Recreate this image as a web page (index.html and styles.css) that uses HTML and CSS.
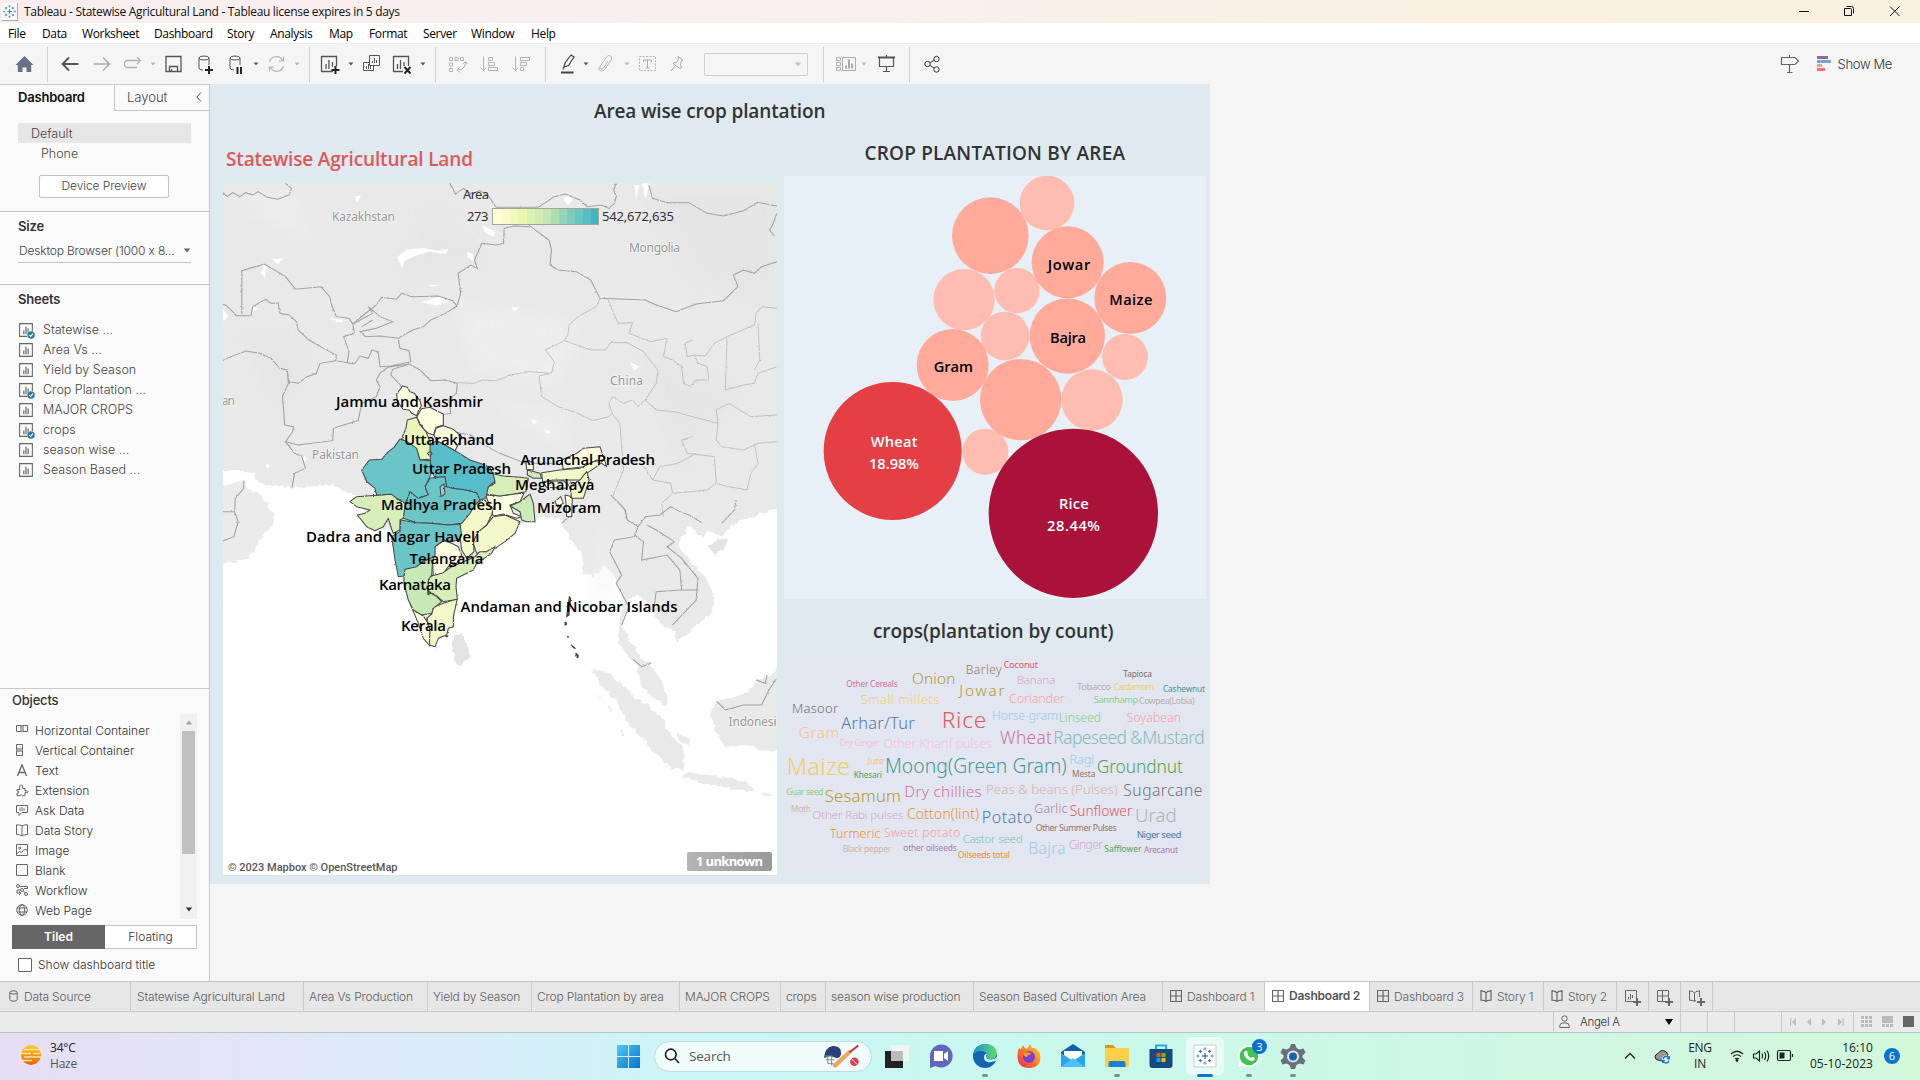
FILE: index.html
```html
<!DOCTYPE html>
<html lang="en">
<head>
<meta charset="utf-8">
<title>Tableau - Statewise Agricultural Land</title>
<link rel="stylesheet" href="styles.css">
</head>
<body>
<svg class="defs" width="0" height="0">
  <defs>
    <symbol id="sheet" viewBox="0 0 16 16"><path d="M1.5 1.5h12v12h-12z" fill="none" stroke="#666"/><path d="M5.5 8v3.500M7.500 4.500v7M9.500 6v5.500" stroke="#555" fill="none"/></symbol>
    <symbol id="sheet-used" viewBox="0 0 16 16"><path d="M1.500 1.500h12v12h-12z" fill="none" stroke="#666"/><path d="M5.500 8v3.500M7.500 4.500v7M9.500 6v5.500" stroke="#555" fill="none"/><circle cx="12.300" cy="12.300" r="4" fill="#fafafa"/><circle cx="12.300" cy="12.300" r="3.500" fill="#2e7ba6"/><path d="M10.600 12.300l1.300 1.300 2.200-2.600" stroke="#fff" fill="none"/></symbol>
    <symbol id="caret" viewBox="0 0 8 5"><path d="M.8.5h6.400L4 4.500z" fill="currentColor"/></symbol>
    <symbol id="dash" viewBox="0 0 12 12"><path d="M.5.500h11v11h-11zM6 .5v11M.5 6h11" fill="none" stroke="#666" stroke-width="1.200"/></symbol>
    <symbol id="story" viewBox="0 0 12 12"><path d="M6 3 4.500 1.500 1 .8v9.400l3.500.3L6 11.500l1.500-1 3.500-.3V.8l-3.500.7zM6 3v8" fill="none" stroke="#666" stroke-width="1.200"/></symbol>
    <symbol id="logo" viewBox="0 0 24 24"><g fill="none" stroke="#4a7ba8" stroke-width="1.700"><path d="M12 8.500v7M8.500 12h7"/><path d="M12 1.500v4M10 3.500h4M12 18.500v4M10 20.500h4" stroke="#6b93b5" stroke-width="1.200"/><path d="M1.500 12h4M3.500 10v4M18.500 12h4M20.500 10v4" stroke="#6b93b5" stroke-width="1.200"/><path d="M6.500 4.500v4M4.500 6.500h4M17.500 4.500v4M15.500 6.500h4M6.500 15.500v4M4.500 17.500h4M17.500 15.500v4M15.500 17.500h4" stroke-width="1.400"/></g></symbol>
  </defs>
</svg>

<header class="titlebar">
  <svg class="app-icon" width="16" height="18"><use href="#logo"/></svg>
  <span class="app-title">Tableau - Statewise Agricultural Land - Tableau license expires in 5 days</span>
  <svg class="win-buttons" width="110" height="20" viewBox="0 0 110 20" fill="none" stroke="#111"><path d="M1 9.500h10M46.500 6.500h6q1 0 1 1v6h-7zM48.500 4.500h5q2 0 2 2v5M92 4.500l9.500 9.500M101.500 4.500 92 14"/></svg>
</header>

<nav class="menubar">
  <span>File</span><span>Data</span><span>Worksheet</span><span>Dashboard</span><span>Story</span><span>Analysis</span><span>Map</span><span>Format</span><span>Server</span><span>Window</span><span>Help</span>
</nav>

<div class="toolbar">
  <div class="tgroup home"><svg class="ic" viewBox="0 0 31 24"><path d="M15.500 4 6.500 13h2.300v7h4.700v-4.500h4V20h4.700v-7h2.300z" fill="#657384"/></svg></div>
  <div class="tgroup g2">
    <svg class="ic" viewBox="0 0 31 24"><path d="M23.500 12H7.500M14 5.500 7.500 12l6.500 6.500" stroke="#555" stroke-width="1.800"/></svg>
    <svg class="ic" viewBox="0 0 31 24"><path d="M7.500 12H23M17 5.500l6.500 6.500-6.500 6.500" stroke="#aaa" stroke-width="1.500"/></svg>
    <svg class="ic" viewBox="0 0 31 24"><path d="M20 15.500h-9q-3.500 0-3.500-3.500T11 8.500h12M20 5.500l3.500 3-3.500 3.500" stroke="#b5b5b5" stroke-width="1.300"/></svg>
    <svg class="cr dim"><use href="#caret"/></svg>
    <svg class="ic" viewBox="0 0 31 24"><path d="M8 4.500h15v15H8zM11.500 19.500v-5h8v5M13.500 17v2.500" stroke="#555" stroke-width="1.300"/></svg>
    <svg class="ic" viewBox="0 0 31 24"><ellipse cx="15" cy="6" rx="5" ry="2" stroke="#555"/><path d="M10 6v10q0 2 4 2M20 6v7" stroke="#555"/><path d="M20 14v8M16 18h8" stroke="#222" stroke-width="2"/></svg>
    <svg class="ic" viewBox="0 0 31 24"><ellipse cx="15" cy="6" rx="5" ry="2" stroke="#555"/><path d="M10 6v10q0 2 4 2M20 6v7" stroke="#555"/><path d="M17.500 15v7M21 15v7" stroke="#222" stroke-width="2"/></svg>
    <svg class="cr"><use href="#caret"/></svg>
    <svg class="ic" viewBox="0 0 31 24"><path d="M8.500 10a7 7 0 0 1 13-1.500M22.500 14a7 7 0 0 1-13 1.500M22.500 4.500v4.500H18M8.500 19.500V15H13" stroke="#b5b5b5" stroke-width="1.200"/></svg>
    <svg class="cr dim"><use href="#caret"/></svg>
  </div>
  <div class="tgroup g3">
    <svg class="ic" viewBox="0 0 31 24"><path d="M18 19.500H6.500v-15h15V14M11 12v5M14 8v9M17.500 10v5" stroke="#555" stroke-width="1.300"/><path d="M20.500 14v8M16.500 18h8" stroke="#222" stroke-width="2"/></svg>
    <svg class="cr"><use href="#caret"/></svg>
    <svg class="ic" viewBox="0 0 31 24"><path d="M13.500 3.500h10v10h-10zM16.500 9v2M18.500 6v5M20.500 8v3M17.500 13.500v5h-10v-8h6M10.500 14v3M12.500 12v5M14.500 14v3" stroke="#555"/></svg>
    <svg class="ic" viewBox="0 0 31 24"><path d="M16 19.500H6.500v-15h15V14M10.500 12v5M13.500 8v9M17 10v4" stroke="#555" stroke-width="1.300"/><path d="m17.500 15 6 6.500M23.500 15l-6 6.500" stroke="#222" stroke-width="1.900"/></svg>
    <svg class="cr"><use href="#caret"/></svg>
  </div>
  <div class="tgroup g4">
    <svg class="ic" viewBox="0 0 31 24"><path d="M7.500 5.500h3v3h-3zM13 5.500h3v3h-3zM18.500 5.500h3v3h-3zM7.500 11h3v3h-3zM7.500 16.500h3v3h-3zM23.500 10q0 8-8.500 8M21 12l2.500-2.500 2 2.500M17.500 15.500 15 18l2.500 2.500" stroke="#b5b5b5"/></svg>
    <svg class="ic" viewBox="0 0 31 24"><path d="M9.500 4.500v14M6.500 15.500l3 3 3-3M14.500 5.500h4v3h-4zM14.500 10.500h6v3h-6zM14.500 15.500h9v3h-9z" stroke="#b5b5b5"/></svg>
    <svg class="ic" viewBox="0 0 31 24"><path d="M9.500 4.500v14M6.500 15.500l3 3 3-3M14.500 5.500h9v3h-9zM14.500 10.500h6v3h-6zM14.500 15.500h3v3h-3z" stroke="#b5b5b5"/></svg>
  </div>
  <div class="tgroup g5">
    <svg class="ic" viewBox="0 0 31 24"><path d="m11 15 1-4 6-8 3 2-5.500 8.500zM11 15l-1 2.500" stroke="#444" stroke-width="1.200"/><path d="M8 20.500h12.500" stroke="#444" stroke-width="2"/></svg>
    <svg class="cr tight"><use href="#caret"/></svg>
    <svg class="ic" viewBox="0 0 31 24"><path d="M17 9l-4.500 7q-1.500 2-3 .8t0-3.200l6-8.600q2-2.500 4-1t.5 4L14 17q-2 3-4.500 2t-1-4" stroke="#b5b5b5"/></svg>
    <svg class="cr dim"><use href="#caret"/></svg>
    <svg class="ic" viewBox="0 0 31 24"><path d="M7.500 4.500h16v14h-16z" stroke="#b5b5b5" stroke-dasharray="2 1.300"/><path d="M11.500 10V8h8v2M15.500 8v8M13.500 16h4" stroke="#aaa"/></svg>
    <svg class="ic" viewBox="0 0 31 24"><path d="m15 4.500 5 3.500-1.500.5-1 4.500 1 2.500-1.500 1-6-4-.5-1.500 3-.5L15.500 7zM12 14l-4 5" stroke="#aaa"/></svg>
    <div class="combo"><svg class="cr"><use href="#caret"/></svg></div>
  </div>
  <div class="tgroup g6">
    <svg class="ic" viewBox="0 0 31 24"><path d="M5.500 5.500h4v3h-4zM5.500 10.500h4v3h-4zM5.500 15.500h4v3h-4zM11.500 5.500h13v13h-13z" stroke="#aaa"/><path d="M15 16.500v-3M18 16.500v-9M21 16.500v-5" stroke="#aaa" stroke-width="2"/></svg>
    <svg class="cr dim tight"><use href="#caret"/></svg>
    <svg class="ic" viewBox="0 0 31 24"><path d="M9 5.500h17" stroke="#555" stroke-width="2"/><path d="M10.500 6v8.500h14V6M17.500 3v2M17.500 14.500v5M14 19.500h7" stroke="#555" stroke-width="1.200"/></svg>
  </div>
  <div class="tgroup g7">
    <svg class="ic" viewBox="0 0 31 24" stroke="#333"><circle cx="10.500" cy="12" r="2.700"/><circle cx="19.500" cy="7" r="2.700"/><circle cx="19.500" cy="17.500" r="2.700"/><path d="m13 10.700 4-2.300M13 13.300l4 2.700"/></svg>
  </div>
  <div class="showme">
    <svg class="sign" width="20" height="20" viewBox="0 0 20 20" fill="none" stroke="#666" stroke-width="1.200"><path d="M1.500 3.500h13.500l3.500 3.500-3.500 3.500H1.500zM9.500 1v2M9.500 10.500v8M7 18.500h5.500"/></svg>
    <svg width="14" height="16" viewBox="0 0 14 16"><path d="M0 0h11v3H0z" fill="#8a719c"/><path d="M0 4h14v3H0z" fill="#7f9fcd"/><path d="M0 8h5v3H0z" fill="#f0a07c"/><path d="M0 12h8v3H0z" fill="#f76d80"/></svg>
    <span>Show Me</span>
  </div>
</div>

<main class="workspace">
  <aside class="side">
    <div class="side-tabs"><b>Dashboard</b><div class="layout-tab"><span>Layout</span><svg width="6" height="10" viewBox="0 0 6 10"><path d="M5 .5.800 5 5 9.500" fill="none" stroke="#444"/></svg></div></div>
    <div class="devices">
      <div class="device sel">Default</div>
      <div class="device sub">Phone</div>
      <div class="preview">Device Preview</div>
    </div>
    <section class="size">
      <h3>Size</h3>
      <div class="size-select"><span>Desktop Browser (1000 x 8...</span><svg width="8" height="5"><use href="#caret"/></svg></div>
    </section>
    <section class="sheets">
      <h3>Sheets</h3>
      <ul>
        <li><svg><use href="#sheet-used"/></svg>Statewise ...</li>
        <li><svg><use href="#sheet"/></svg>Area Vs ...</li>
        <li><svg><use href="#sheet"/></svg>Yield by Season</li>
        <li><svg><use href="#sheet-used"/></svg>Crop Plantation ...</li>
        <li><svg><use href="#sheet"/></svg>MAJOR CROPS</li>
        <li><svg><use href="#sheet-used"/></svg>crops</li>
        <li><svg><use href="#sheet"/></svg>season wise ...</li>
        <li><svg><use href="#sheet"/></svg>Season Based ...</li>
      </ul>
    </section>
    <section class="objects">
      <h3>Objects</h3>
      <div class="obj-body">
        <ul>
          <li><svg viewBox="0 0 13 13"><path d="M.5 1.500h5v6h-5zM6.500 1.500h5v6h-5z"/><path d="M4 2h4v5H4z" fill="#aaa" stroke="none"/></svg>Horizontal Container</li>
          <li><svg viewBox="0 0 13 13"><path d="M.5.500h6v5h-6zM.5 6.500h6v5h-6z"/><path d="M1 4h5v4H1z" fill="#aaa" stroke="none"/></svg>Vertical Container</li>
          <li><svg viewBox="0 0 13 13"><path d="M1.500 12 6 .8 10.500 12M3 8.500h6" stroke-width="1.300"/></svg>Text</li>
          <li><svg viewBox="0 0 13 13"><path d="M1 5.500h3q-1.300-4.500 1.200-4.500t1.300 3.500H9v2.500q3-.8 3 .8T9 8.500v3.200H6.500Q5 9.500 4 11.700H1V9q2 0 2-1t-2-1z"/></svg>Extension</li>
          <li><svg viewBox="0 0 13 13"><path d="M.5 1.500h11v7H6l-3 3v-3H.5z"/><path d="M4 3.500v3.500M6 3v4M8 4v3" stroke="#aaa" stroke-width="1.600"/></svg>Ask Data</li>
          <li><svg viewBox="0 0 13 13"><path d="M6 1.800 3.500 1 .5.800v9.700l3 .3 2.500 1 2.500-1 3-.3V.8l-3 .2zM6 2v9.500"/></svg>Data Story</li>
          <li><svg viewBox="0 0 13 13"><path d="M.5.500h11v11H.5zM1 9.500l2.500-2 2 1 2.500-3 3 .5"/><circle cx="3.800" cy="4" r="1"/></svg>Image</li>
          <li><svg viewBox="0 0 13 13"><path d="M.5.500h11v11H.5z"/></svg>Blank</li>
          <li><svg viewBox="0 0 13 13"><circle cx="2" cy="2" r="1.500"/><circle cx="6" cy="6" r="1.500"/><circle cx="10" cy="10" r="1.500"/><path d="M4 2.500h7.500v2H8M4.500 6H1v3h4M3 7.500l2 1.500-2 2M7.500 7.500l1.500 1"/></svg>Workflow</li>
          <li><svg viewBox="0 0 13 13"><circle cx="6" cy="6" r="5.300"/><ellipse cx="6" cy="6" rx="2.600" ry="5.300"/><path d="M1 4h10M1 8h10"/></svg>Web Page</li>
        </ul>
        <div class="scroll"><svg width="8" height="5" class="up"><use href="#caret"/></svg><div class="thumb"></div><svg width="8" height="5"><use href="#caret"/></svg></div>
      </div>
      <div class="toggle"><b>Tiled</b><span>Floating</span></div>
      <label class="check"><i></i>Show dashboard title</label>
    </section>
  </aside>

  <div class="dashboard">
    <h1><svg width="1000" height="56"><text x="384" y="34" textLength="231.500">Area wise crop plantation</text></svg></h1>
    <div class="panes">
      <div class="pane-map">
        <h2 class="red"><svg width="554" height="43"><text x="3" y="26" textLength="247">Statewise Agricultural Land</text></svg></h2>
        <svg class="map" width="554" height="693" viewBox="223 183 554 693">
          <defs>
            <filter id="rough" x="-5%" y="-5%" width="110%" height="110%"><feTurbulence type="fractalNoise" baseFrequency=".16" numOctaves="2" seed="4"/><feDisplacementMap in="SourceGraphic" scale="6" xChannelSelector="R" yChannelSelector="G"/></filter>
            <filter id="haze"><feGaussianBlur stdDeviation="9"/></filter>
            <linearGradient id="unk" x1="0" x2="1"><stop offset="0" stop-color="#b4b4b4"/><stop offset="1" stop-color="#9a9a9a"/></linearGradient>
          </defs>
          <rect x="223" y="183" width="554" height="693" fill="#fff"/>
          <g filter="url(#rough)">
            <g transform="translate(220 170) scale(.3635 .33333)" fill="#e9e9e9">
              <path d="M-20 0H1560V1010L1480 1032 1440 1050 1410 1065 1385 1095 1345 1085 1330 1100 1290 1072 1265 1105 1262 1130 1300 1180 1340 1230 1360 1280 1355 1325 1320 1360 1290 1385 1255 1415 1253 1385 1205 1355 1190 1310 1170 1295 1150 1272 1120 1290 1107 1368 1130 1420 1160 1465 1185 1485 1215 1530 1235 1602 1225 1608 1190 1580 1160 1550 1148 1490 1095 1420 1100 1360 1108 1290 1085 1220 1060 1185 1025 1220 1000 1205 995 1150 960 1100 940 1050 890 1040 860 1050 815 1070 700 1160 650 1230 645 1370 585 1425 540 1350 490 1210 465 1080 420 1075 400 1030 380 985 350 965 310 945 200 953 110 940 90 910 60 902 -20 905z"/>
              <path d="M-20 950 50 935 68 930 72 955 100 965 150 1030 145 1060 130 1085 105 1115 100 1135 75 1165 45 1175 -20 1185z" fill="#ebebeb"/>
              <path d="M645 1395 665 1395 682 1430 690 1460 665 1487 645 1475 640 1430z" fill="#e4e4e4"/>
              <path d="M1020 1497 1075 1512 1150 1590 1180 1605 1220 1650 1240 1700 1275 1730 1275 1800 1240 1795 1190 1740 1110 1640 1090 1590 1050 1550z"/>
              <path d="M1275 1807 1320 1812 1400 1825 1440 1835 1480 1865 1400 1855 1330 1840 1275 1822zM1490 1868l30 6-5 6-25-4zM1260 1690l30 15 5 20-30-10z"/>
              <path d="M1560 1475 1510 1520 1480 1525 1450 1570 1410 1580 1370 1592 1350 1630 1360 1680 1390 1730 1460 1725 1500 1745 1560 1740z"/>
              <path d="M1345 1130 1370 1108 1398 1112 1385 1140 1360 1155z" fill="#e4e4e4"/>
              <path d="M1030 1572l12 8 4 8zM1068 1605l12 16-6 4zM1098 1675l15 15-6 6zM1120 1700l15 20zM-10 1309l30 2-20 3z"/>
            </g>
          </g>
          <g filter="url(#haze)" opacity=".5">
            <path d="M640 190h140v120l-90-30zM430 200l60 60-90 20zM240 330l70 20-30 60zM640 350l100 40-60 80z" fill="#e2e2e2"/>
            <path d="M450 300l130 20-20 70-90-20zM235 200l60-10 20 60zM600 500l20 80-30 30zM480 400l80 10 20 50z" fill="#f2f2f2"/>
          </g>
          <g transform="translate(220 170) scale(.3635 .33333)" fill="#fff" filter="url(#rough)">
            <path d="M487 262 515 238 560 234 600 242 628 238 620 252 575 245 530 260 505 275 503 298zM555 395l50-15 30 10-40 18zM120 285l8 2-5 38-8-15zM145 268l30-3-15 18zM370 80l18-4-10 22zM1140 45l14 0-10 45zM1160 40l20 0-8 50zM945 88l12-12 14 14-14 16zM722 165l35 20-5 15-20-10zM682 245l15 10 0 20-18-15zM85 405l20 10-15 15zM300 445l50 6-20 6zM800 412l25 0-15 12zM1128 575l25 15-15 12zM855 748l18 4-8 12zM893 780l20 6-16 6zM570 343l32 3-20 5zM0 400l22 40-22 20zM126 880l12 6-8 10zM225 858l15 6-8 14z"/>
          </g>
          <g transform="translate(220 170) scale(.3635 .33333)" class="border" filter="url(#rough)">
            <path d="M0 60 20 80 35 68 55 80 70 68 90 75 105 65 130 82 160 88 190 75 197 55 180 40M632 40 648 72 670 55 690 72 715 62 740 80 760 112 800 112 875 112 920 80 950 72 990 90 1010 110 1050 105 1070 115 1085 100 1090 80 1083 60 1090 40M1180 45 1190 85 1230 98 1290 98 1340 130 1385 138 1440 122 1480 97 1532 108M1532 130 1520 165 1512 180 1525 198"/>
            <path d="M60 437V302L122 282 180 320 208 358 278 350 302 380 308 408 320 440 355 445 365 462 395 435 430 405 445 382 485 388 500 370 530 380 600 378 640 392 652 408 662 370 655 310 690 285 708 295 700 270 720 220 760 225 780 220 782 175 810 168 855 170 880 190 905 210 912 240 908 285 930 300 980 305 1020 330 1045 385 1170 390 1200 405 1255 425 1310 402 1385 392 1425 350 1412 315 1440 300 1470 310 1490 290 1532 275"/>
            <path d="M0 402 15 405 35 425 45 437 85 437 90 410 125 388 140 400 160 400 165 430 190 435 210 455 215 480 245 510 285 535 320 555 318 572 350 578 355 545 340 500 370 490 365 460M365 462 420 430 408 410 440 440 475 455 430 475 385 485 400 500 440 498 490 505 530 480 560 470 580 450 620 430 652 408M390 470 420 450"/>
            <path d="M0 575 30 560 70 543 110 550 140 565 165 595 185 600 190 635 215 640 240 620 265 610 275 580 318 572M350 578 370 582 385 558 408 565 418 540 435 545 440 590 470 588 525 575 520 542 495 535 490 505M185 600 188 640 172 680 178 765 202 770 200 785 180 815 215 825 310 812 312 775 340 765 380 752 390 700 430 680 440 650 430 630 440 610 462 592 520 582 550 600 580 632 620 630 653 640 650 670 630 690 635 730 610 735"/>
            <path d="M180 815 205 850 225 858 235 895 205 910 198 953M505 655 470 615 475 598 520 582M640 785 690 795 720 820 770 850 840 880 900 880 950 885"/>
            <path d="M8 1025 40 1025 50 1055 38 1100 8 1113M40 1025 42 985 65 955 65 930" />
          </g>
          <g transform="translate(220 170) scale(.3635 .33333)" class="border thin" filter="url(#rough)">
            <path d="M1045 385 1035 410 985 440 960 465 958 490 948 512 895 540 920 575 912 610 850 605 800 615 760 632 720 630 700 640 653 638M912 610 878 618 885 680 930 710 980 728 1025 752 1070 740 1078 730 1070 700 1080 680 1110 700 1135 690 1150 710 1170 690 1200 640 1205 600 1190 580 1165 545 1120 518 1075 518 1060 540 1020 540 948 512M1068 390 1095 460 1135 458 1125 490 1185 515 1230 505 1220 560 1245 570 1270 590 1275 640 1295 650 1310 630 1345 630 1340 590 1315 580 1305 555 1285 560 1280 520 1300 510M1305 555 1335 558 1360 520 1395 500 1470 465 1475 430 1490 410 1532 415M1395 500 1390 660 1440 645 1470 640 1480 610 1532 590M1170 690 1200 720 1250 725 1300 740 1370 760 1365 720 1400 700 1460 740 1532 735M1370 760 1365 810 1380 830 1440 840 1480 820 1532 815M1480 460 1485 570 1470 600M1300 800 1270 810 1285 850 1360 860 1365 940 1400 950 1450 960 1460 910 1480 880 1470 820M1078 730 1100 760 1110 900 1080 980 1110 1010 1120 1050M1190 930 1240 940 1245 970 1215 1000 1220 1040M1160 880 1190 930 1210 890 1260 880 1310 850M1245 970 1340 960 1365 940"/>
          </g>
          <g transform="translate(220 170) scale(.3635 .33333)" class="border" filter="url(#rough)">
            <path d="M1075 975 1115 1020 1120 1050 1150 1070 1170 1040 1210 1035 1240 1010 1265 1025 1290 1035 1325 1058M1150 1070 1140 1100 1085 1110 1072 1145 1105 1215 1090 1240 1125 1310 1105 1365M1140 1095 1165 1115 1160 1170 1230 1155 1265 1200 1270 1260 1315 1260M1175 1065 1200 1080 1250 1115 1230 1130 1270 1165 1315 1225 1310 1290 1245 1365M1270 1260 1200 1265 1195 1305M1136 1468 1160 1490 1185 1480M1365 1592 1390 1620 1440 1605 1490 1605 1510 1560 1530 1528M1475 1530 1500 1540 1505 1515M940 1060 955 1045M1380 1060 1415 1020 1420 990"/>
          </g>
          <g transform="translate(320 370) scale(.33333)" class="states" filter="url(#rough)">
            <g fill="#fcfde0">
              <path d="M248 48 262 52 270 65 283 70 300 92 304 108 296 120 290 137 275 130 268 120 250 118 232 95 230 72z"/>
              <path d="M304 116 330 112 352 124 370 132 370 165 348 172 340 195 325 190 312 178 300 160 290 142z"/>
              <path d="M348 175 370 167 400 178 425 200 405 243 375 225 350 212 342 195z"/>
              <path d="M345 530 372 512 395 520 415 530 425 555 410 580 385 590 370 610 340 618 338 580z"/>
              <path d="M497 375 540 378 580 372 612 370 600 395 570 405 580 430 605 440 590 445 550 432 520 438 510 410z"/>
              <path d="M725 270 770 250 790 235 840 230 850 260 860 290 830 270 790 290 730 298z"/>
              <path d="M735 375 757 380 755 440 740 440 738 400zM705 395 722 380 730 400 712 410zM618 275 640 275 640 300 620 298zM668 335 730 332 745 345 740 355 680 352z"/>
              <path d="M270 700 290 725 310 738 325 760 332 790 330 828 310 805 295 760z"/>
            </g>
            <g fill="#f3f8c8">
              <path d="M412 686 400 740 400 770 385 775 380 795 355 805 345 830 328 825 330 780 320 745 335 732 340 712 370 700z"/>
              <path d="M520 440 555 435 600 455 585 490 555 515 525 535 500 545 470 550 460 520 470 490 500 465z"/>
              <path d="M450 420 470 395 495 390 505 405 520 415 515 435 500 465 475 485 460 510 462 545 440 565 425 540 420 500 420 465 425 455z"/>
              <path d="M665 308 720 300 780 295 820 275 850 270 830 290 800 310 790 330 760 330 700 330 668 335z"/>
              <path d="M800 305 808 330 790 385 755 385 750 350 780 330z"/>
            </g>
            <path fill="#ebf5b9" d="M262 150 290 142 300 165 318 185 330 215 335 245 338 272 320 268 300 270 290 240 265 225 245 205 258 175z"/>
            <g fill="#d8eeb9">
              <path d="M90 395 110 380 170 376 220 372 232 388 258 400 250 445 240 450 240 480 220 490 212 470 205 445 190 470 165 482 140 470 112 435 135 430 150 420 110 410z"/>
              <path d="M335 618 370 608 395 590 430 575 465 560 480 545 500 545 525 530 515 550 470 580 460 600 430 615 410 625 408 650 412 688 370 695 350 678 325 665 325 625z"/>
              <path d="M510 310 550 318 600 322 625 325 618 365 580 372 540 378 497 372 505 350 525 340z"/>
            </g>
            <path fill="#cdebb9" d="M630 372 640 400 645 455 620 455 605 450 600 425 570 408 600 395zM622 300 660 310 665 325 640 325 622 315z"/>
            <path fill="#c7e9b7" d="M252 598 290 588 320 570 338 570 335 615 325 630 325 665 350 680 365 695 340 715 335 730 305 735 280 720 265 690 252 640z"/>
            <g fill="#6ac5c7">
              <path d="M240 207 262 215 290 235 300 270 335 272 340 290 330 320 315 350 325 375 290 385 270 372 255 400 230 385 215 373 170 375 165 355 140 335 125 300 148 270 185 268 205 245 222 232z"/>
              <path d="M315 350 330 325 375 318 380 350 400 355 440 360 470 368 480 390 465 405 450 430 425 460 385 465 330 460 290 458 250 445 255 410 270 365 295 385 325 375z"/>
              <path d="M242 450 290 458 330 460 385 465 420 462 425 495 415 510 390 515 372 510 345 530 345 560 310 572 290 590 255 598 252 618 235 620 225 570 215 500 240 485z"/>
            </g>
            <path fill="#58bdcb" d="M330 225 350 212 375 225 410 245 450 270 480 280 510 292 520 315 525 335 505 350 497 385 480 390 470 368 440 360 400 355 380 350 375 320 345 322 332 300z"/>
            <path fill="#fcfde0" d="M322 250l8-6 6 6-6 8zM360 350l12-8 3 30-12 8z" fill-opacity=".2"/>
            <path fill="#555" d="M748 680l4 5-5 50-7 5 4-30zM735 757l5 2-4 7zM743 799l2 1-1 3zM754 825l6 5 6 5-5-1zM768 850l7 6-2 8-6-6zM376 797l8 1-4 3zM322 650l10 20-8 4z"/>
          </g>
          <g class="country">
            <text x="332" y="221" textLength="63">Kazakhstan</text>
            <text x="629" y="252" textLength="51">Mongolia</text>
            <text x="610" y="385" textLength="33">China</text>
            <text x="312" y="459" textLength="47">Pakistan</text>
            <text x="222" y="405" textLength="13">an</text>
            <text x="728.500" y="726" textLength="48">Indonesi</text>
          </g>
          <text x="429" y="512" textLength="26" font-size="12" fill="#4fb3b8">India</text>
          <g class="state-names">
            <text x="336" y="407" textLength="147">Jammu and Kashmir</text>
            <text x="404" y="445" textLength="90">Uttarakhand</text>
            <text x="412" y="474" textLength="99">Uttar Pradesh</text>
            <text x="520.500" y="465" textLength="134.500">Arunachal Pradesh</text>
            <text x="515" y="490" textLength="79.500">Meghalaya</text>
            <text x="381" y="510" textLength="121">Madhya Pradesh</text>
            <text x="537" y="513" textLength="64">Mizoram</text>
            <text x="306" y="542" textLength="173.500">Dadra and Nagar Haveli</text>
            <text x="409.500" y="564" textLength="74">Telangana</text>
            <text x="379" y="590" textLength="72">Karnataka</text>
            <text x="460.500" y="612" textLength="217">Andaman and Nicobar Islands</text>
            <text x="401" y="631" textLength="45">Kerala</text>
          </g>
          <text x="463" y="199" textLength="26" class="lgd" font-weight="500">Area</text>
          <text x="467" y="221" textLength="21.500" class="lgd">273</text>
          <g><rect x="492" y="208" width="107" height="17" fill="#fff"/>
            <path fill="#fefed8" d="M493 209h8v15h-8z"/><path fill="#f8fccb" d="M501 209h9v15h-9z"/><path fill="#f2f9bc" d="M510 209h8v15h-8z"/><path fill="#ebf6b1" d="M518 209h9v15h-9z"/><path fill="#ddf1b2" d="M527 209h8v15h-8z"/><path fill="#d0ecb3" d="M535 209h8v15h-8z"/><path fill="#c2e7b4" d="M543 209h8v15h-8z"/><path fill="#abdfb6" d="M551 209h8v15h-8z"/><path fill="#94d6b9" d="M559 209h8v15h-8z"/><path fill="#7dcdbd" d="M567 209h8v15h-8z"/><path fill="#6bc5c1" d="M575 209h8v15h-8z"/><path fill="#58bdc3" d="M583 209h8v15h-8z"/><path fill="#44b4c4" d="M591 209h8v15h-8z"/>
            <rect x="492.500" y="208.500" width="106" height="16" fill="none" stroke="#a8a595"/></g>
          <text x="602" y="221" textLength="72" class="lgd">542,672,635</text>
          <text x="228" y="871" textLength="169.500" class="attrib">© 2023 Mapbox © OpenStreetMap</text>
          <rect x="687" y="852" width="85" height="19" rx="2" fill="url(#unk)"/>
          <text x="696" y="866" textLength="67" class="unknown">1 unknown</text>
          <path d="M223 875.500h554" fill="none" stroke="#e2e2e2"/>
        </svg>
      </div>
      <div class="pane-right">
        <h2><svg width="422" height="36"><text x="80.500" y="20" textLength="260.500">CROP PLANTATION BY AREA</text></svg></h2>
        <svg class="bubbles" width="422" height="423" viewBox="12 138 1266 1269">
          <g fill="#ffbcb0"><circle cx="801" cy="219" r="82"/><circle cx="552" cy="509" r="92"/><circle cx="711" cy="482" r="68"/><circle cx="675" cy="618" r="73"/><circle cx="1035" cy="681" r="69"/><circle cx="936" cy="810" r="92"/><circle cx="616" cy="965" r="69"/></g>
          <g fill="#ffaa9b"><circle cx="631" cy="317" r="115"/><circle cx="863" cy="397" r="108"/><circle cx="1051" cy="504" r="108"/><circle cx="862" cy="618" r="113"/><circle cx="518" cy="705" r="108"/><circle cx="722" cy="809" r="122"/></g>
          <circle cx="338" cy="963" r="207" fill="#e43f44"/><circle cx="880" cy="1150" r="254" fill="#ab1239"/>
          <g class="blabel"><text x="803" y="420" textLength="128">Jowar</text><text x="988" y="525" textLength="129">Maize</text><text x="810" y="638" textLength="108">Bajra</text><text x="461" y="726" textLength="118">Gram</text></g>
          <g class="blabel white"><text x="272" y="951" textLength="141">Wheat</text><text x="267" y="1016" textLength="150">18.98%</text><text x="837" y="1137" textLength="89">Rice</text><text x="801" y="1203" textLength="159">28.44%</text></g>
        </svg>
        <h2><svg width="422" height="56"><text x="89" y="39" textLength="240.500">crops(plantation by count)</text></svg></h2>
        <svg class="cloud" width="422" height="220" viewBox="12 45 1266 660">
          <text x="557" y="102" textLength="108" font-size="36" fill="#9c755f">Barley</text>
          <text x="671" y="84" textLength="103" font-size="27" class="s" fill="#e15759">Coconut</text>
          <text x="1030" y="111" textLength="86" font-size="25" class="s" fill="#79706e">Tapioca</text>
          <text x="396" y="131" textLength="130" font-size="46" fill="#b6992d">Onion</text>
          <text x="710" y="131" textLength="116" font-size="34" fill="#d4a6c8">Banana</text>
          <text x="199" y="141" textLength="154" font-size="25" class="s" fill="#d37295">Other Cereals</text>
          <text x="891" y="150" textLength="102" font-size="29" class="s" fill="#bab0ac">Tobacco</text>
          <text x="1001" y="150" textLength="121" font-size="26" class="s" fill="#f1ce63">Cardamom</text>
          <text x="1149" y="156" textLength="126" font-size="25" class="s" fill="#499894">Cashewnut</text>
          <text x="538" y="168" textLength="136" font-size="46" fill="#b6992d">Jowar</text>
          <text x="242" y="192" textLength="236" font-size="38" fill="#f1ce63">Small millets</text>
          <text x="688" y="189" textLength="166" font-size="36" fill="#ff9d9a">Coriander</text>
          <text x="941" y="189" textLength="134" font-size="28" class="s" fill="#8cd17d">Sannhamp</text>
          <text x="1077" y="192" textLength="167" font-size="26" class="s" fill="#bab0ac">Cowpea(Lobia)</text>
          <text x="36" y="219" textLength="138" font-size="39" fill="#79706e">Masoor</text>
          <text x="184" y="267" textLength="220" font-size="49" fill="#4e79a7">Arhar/Tur</text>
          <text x="485" y="264" textLength="134" font-size="68" fill="#e15759">Rice</text>
          <text x="636" y="241" textLength="198" font-size="37" fill="#a0cbe8">Horse-gram</text>
          <text x="836" y="246" textLength="127" font-size="36" fill="#8cd17d">Linseed</text>
          <text x="1040" y="246" textLength="163" font-size="36" fill="#ff9d9a">Soyabean</text>
          <text x="56" y="293" textLength="122" font-size="46" fill="#ffbe7d">Gram</text>
          <text x="179" y="318" textLength="121" font-size="26" class="s" fill="#fabfd2">Dry Ginger</text>
          <text x="310" y="324" textLength="326" font-size="38" fill="#fabfd2">Other Kharif pulses</text>
          <text x="660" y="312" textLength="156" font-size="52" fill="#d37295">Wheat</text>
          <text x="820" y="312" textLength="454" font-size="52" fill="#86bcb6">Rapeseed &amp;Mustard</text>
          <text x="20" y="405" textLength="190" font-size="70" fill="#f1ce63">Maize</text>
          <text x="263" y="372" textLength="49" font-size="27" class="s" fill="#ffbe7d">Jute</text>
          <text x="221" y="413" textLength="85" font-size="25" class="s" fill="#59a14f">Khesari</text>
          <text x="315" y="399" textLength="545" font-size="58" fill="#499894">Moong(Green Gram)</text>
          <text x="868" y="373" textLength="74" font-size="40" fill="#a0cbe8">Ragi</text>
          <text x="876" y="411" textLength="70" font-size="25" class="s" fill="#9c755f">Mesta</text>
          <text x="950" y="399" textLength="259" font-size="52" fill="#59a14f">Groundnut</text>
          <text x="19" y="465" textLength="111" font-size="25" class="s" fill="#8cd17d">Guar seed</text>
          <text x="134" y="486" textLength="229" font-size="50" fill="#b6992d">Sesamum</text>
          <text x="373" y="471" textLength="232" font-size="46" fill="#d37295">Dry chillies</text>
          <text x="618" y="462" textLength="395" font-size="40" fill="#d7b5a6">Peas &amp; beans (Pulses)</text>
          <text x="1030" y="467" textLength="237" font-size="47" fill="#79706e">Sugarcane</text>
          <text x="33" y="515" textLength="60" font-size="25" class="s" fill="#d7b5a6">Moth</text>
          <text x="97" y="537" textLength="273" font-size="35" fill="#d4a6c8">Other Rabi pulses</text>
          <text x="381" y="536" textLength="216" font-size="41" fill="#f28e2b">Cotton(lint)</text>
          <text x="605" y="548" textLength="152" font-size="48" fill="#4e79a7">Potato</text>
          <text x="763" y="519" textLength="99" font-size="37" fill="#b07aa1">Garlic</text>
          <text x="869" y="528" textLength="188" font-size="41" fill="#e15759">Sunflower</text>
          <text x="1065" y="545" textLength="125" font-size="56" fill="#bab0ac">Urad</text>
          <text x="767" y="573" textLength="243" font-size="26" class="s" fill="#9c755f">Other Summer Pulses</text>
          <text x="150" y="594" textLength="151" font-size="37" fill="#f28e2b">Turmeric</text>
          <text x="312" y="591" textLength="229" font-size="36" fill="#ff9d9a">Sweet potato</text>
          <text x="548" y="609" textLength="180" font-size="35" fill="#86bcb6">Castor seed</text>
          <text x="1070" y="594" textLength="134" font-size="29" class="s" fill="#4e79a7">Niger seed</text>
          <text x="188" y="635" textLength="146" font-size="26" class="s" fill="#d7b5a6">Black pepper</text>
          <text x="370" y="632" textLength="160" font-size="25" class="s" fill="#b07aa1">other oilseeds</text>
          <text x="745" y="642" textLength="112" font-size="47" fill="#a0cbe8">Bajra</text>
          <text x="866" y="627" textLength="103" font-size="36" fill="#d4a6c8">Ginger</text>
          <text x="973" y="635" textLength="111" font-size="25" class="s" fill="#59a14f">Safflower</text>
          <text x="1092" y="638" textLength="102" font-size="25" class="s" fill="#b07aa1">Arecanut</text>
          <text x="533" y="654" textLength="157" font-size="26" class="s" fill="#f28e2b">Oilseeds total</text>
        </svg>
      </div>
    </div>
  </div>
</main>

<nav class="sheet-tabs">
  <div><svg width="9" height="12" viewBox="0 0 9 12"><path d="M.8 2.500v7q0 1.700 3.700 1.700t3.700-1.700v-7Q8.200.8 4.500.8T.8 2.500q0 1.500 3.700 1.500t3.700-1.500" fill="none" stroke="#666"/></svg>Data Source</div>
  <div>Statewise Agricultural Land</div><div>Area Vs Production</div><div>Yield by Season</div><div>Crop Plantation by area</div><div>MAJOR CROPS</div><div>crops</div><div>season wise production</div><div>Season Based Cultivation Area</div>
  <div><svg width="12" height="12"><use href="#dash"/></svg>Dashboard 1</div>
  <div class="active"><svg width="12" height="12"><use href="#dash"/></svg>Dashboard 2</div>
  <div><svg width="12" height="12"><use href="#dash"/></svg>Dashboard 3</div>
  <div><svg width="12" height="12"><use href="#story"/></svg>Story 1</div>
  <div><svg width="12" height="12"><use href="#story"/></svg>Story 2</div>
  <div class="new"><svg width="17" height="16" viewBox="0 0 17 16" fill="none" stroke="#666"><path d="M9 11.500H1.500v-11h11V8M4.500 7v2.500M6.500 4v5.500M8.500 5v3"/><path d="M13 8v8M9 12h8" stroke-width="2"/></svg></div>
  <div class="new"><svg width="17" height="16" viewBox="0 0 17 16" fill="none" stroke="#666"><path d="M9 11.500H1.500v-11h11V8M6.500.5v11M1.500 6h11"/><path d="M13 8v8M9 12h8" stroke-width="2"/></svg></div>
  <div class="new"><svg width="17" height="16" viewBox="0 0 17 16" fill="none" stroke="#666"><path d="M6.500 3 5 1.500 1.500.8v9.400l3.500.3 1.500 1 1.500-1M6.500 3v8M6.500 3 8 1.500l3.500-.7V7"/><path d="M13 8v8M9 12h8" stroke-width="2"/></svg></div>
  <div class="rest"></div>
</nav>

<div class="status">
  <div class="fill"></div>
  <div class="user"><svg width="11" height="14" viewBox="0 0 11 14" fill="none" stroke="#666"><circle cx="5.500" cy="3.500" r="2.700"/><path d="M.8 12.500V11q0-3 3-3h3.400q3 0 3 3v1.500z"/></svg><span>Angel A</span><svg width="8" height="6" viewBox="0 0 8 6"><path d="M0 0h8L4 6z" fill="#000"/></svg></div>
  <div></div><div></div><div></div>
  <div class="navs"><svg width="58" height="10" viewBox="0 0 58 10" fill="#bdbdbd"><path d="M2 1h1.200v8H2zM8 1v8L4 5zM23 1v8l-4-4zM34 1v8l4-4zM50 1v8l4-4zM54.500 1h1.200v8h-1.200z"/></svg></div>
  <div class="views"><svg width="54" height="12" viewBox="0 0 54 12"><path d="M0 0h3v3H0zM4 0h3v3H4zM8 0h3v3H8zM0 4h3v3H0zM4 4h3v3H4zM8 4h3v3H8zM0 8h3v3H0zM4 8h3v3H4zM8 8h3v3H8zM21 0h11v7H21zM21 8h3v3h-3zM25 8h3v3h-3zM29 8h3v3h-3z" fill="#bbb"/><path d="M42 0h11v11H42z" fill="#666"/></svg></div>
</div>

<footer class="taskbar">
  <div class="weather">
    <svg width="24" height="22" viewBox="0 0 24 22"><defs><linearGradient id="sun" x2="0" y2="1"><stop offset="0" stop-color="#f9cf1c"/><stop offset="1" stop-color="#e8620c"/></linearGradient></defs><circle cx="12" cy="10" r="10" fill="url(#sun)"/><path d="M5 4.500h19M2 8.500h10M14 8.500h7M5 12h19M0 15.500h13" stroke="#f8e3ae" stroke-width="1.500"/></svg>
    <div><div>34°C</div><div class="haze">Haze</div></div>
  </div>
  <div class="apps">
    <svg class="start" width="23" height="23" viewBox="0 0 23 23"><defs><linearGradient id="win" x2="1" y2="1"><stop offset="0" stop-color="#4cc9f5"/><stop offset="1" stop-color="#0a6fd0"/></linearGradient></defs><path d="M0 0h11v11H0zM12 0h11v11H12zM0 12h11v11H0zM12 12h11v11H12z" fill="url(#win)"/></svg>
    <div class="search">
      <svg width="16" height="16" viewBox="0 0 16 16" fill="none" stroke="#222" stroke-width="1.700"><circle cx="6.800" cy="6.500" r="5.300"/><path d="m10.800 10.500 4.200 4.500"/></svg>
      <span>Search</span>
      <svg width="40" height="26" viewBox="0 0 42 26"><path d="M1 15Q2 4 10 2.500 19 2 19 10q0 5-5 5l-6-2z" fill="#28417e"/><path d="M2 13h8M3 17h9M5 21h6M5 13v8M9 13v10" stroke="#888" fill="none"/><path d="M10 22 27 7q4-1 2.500 3L14 25q-4 1-4-3z" fill="#e9a763"/><path d="m28 9 9-7" stroke="#d42a3a" stroke-width="2"/><circle cx="33" cy="19" r="4.500" fill="#e83a4e"/><path d="m30 16 6 6" stroke="#fff"/></svg>
    </div>
    <svg class="app" viewBox="0 0 36 36"><path d="M6 13h18v17H6z" fill="#222"/><path d="M12 7h18v16H12z" fill="#f5f5f5" opacity=".85"/><path d="M12 13h12v10H12z" fill="#bbb"/></svg>
    <svg class="app" viewBox="0 0 36 36"><path d="M18 6.500A11.500 11.500 0 1 1 12.500 28L7 30V18A11.500 11.500 0 0 1 18 6.500z" fill="#6264c0"/><path d="M11 13h9v10h-9zM21 16l4-3v10l-4-3z" fill="#fff"/></svg>
    <div class="app run"><svg viewBox="0 0 36 36"><defs><linearGradient id="eg" x2="1"><stop offset="0" stop-color="#1d8fe0"/><stop offset="1" stop-color="#5fdc62"/></linearGradient></defs><circle cx="18" cy="18" r="12" fill="#1464b4"/><path d="M6 17Q8 6 18.500 6T30 16q-1 5-6.500 5t-4-3Q20 13 14 13 8 13 6 17z" fill="url(#eg)"/><path d="M20 16q-2 2-.5 4t5 1.500 5.500-2.500l0 3.500-8 2q-5-1-5-5t3-3.500z" fill="#c8f6f2"/></svg></div>
    <svg class="app" viewBox="0 0 36 36"><defs><linearGradient id="ff" x1="1" x2="0" y2="1"><stop offset="0" stop-color="#ffd83a"/><stop offset=".5" stop-color="#ff7a20"/><stop offset="1" stop-color="#f0245e"/></linearGradient></defs><path d="M8 10q1 1 2 1l2-4q1 3 4 4l3-5 2 4 3 0Q29 13 29.500 19 29 30 18 30T6.500 19Q6.500 13 8 10z" fill="url(#ff)"/><circle cx="18" cy="19" r="6" fill="#7a3fd0"/><path d="M12 15q5-2 9 1-4 0-5 3-3 0-4-4z" fill="#ff9a28"/></svg>
    <svg class="app" viewBox="0 0 36 36"><path d="M6 14 18 6l12 8v15H6z" fill="#0f5fae"/><path d="M9 13h18v10H9z" fill="#fff"/><path d="m6 15 12 8 12-8v14H6z" fill="#2aa5ec"/><path d="m6 29 12-9 12 9z" fill="#50c0f8"/></svg>
    <div class="app run"><svg viewBox="0 0 36 36"><path d="M6 7h8l3 3H6z" fill="#d89a10"/><path d="M6 10h24v19H6z" fill="#fcd04a"/><path d="M9.500 29v-4q0-2 2-2h13q2 0 2 2v4z" fill="#1d7fd4"/></svg></div>
    <svg class="app" viewBox="0 0 36 36"><path d="M13 11V7.500h10V11" fill="none" stroke="#29a8e8" stroke-width="2"/><path d="M6.500 11h23v16q0 3-3 3h-17q-3 0-3-3z" fill="#154a80"/><path d="M13.500 15h4v4h-4z" fill="#f25022"/><path d="M18.500 15h4v4h-4z" fill="#7fba00"/><path d="M13.500 20h4v4h-4z" fill="#00a4ef"/><path d="M18.500 20h4v4h-4z" fill="#ffb900"/></svg>
    <div class="app current"><svg viewBox="0 0 36 36"><path d="M7 7h22v22H7z" fill="#fff" stroke="#ccc"/><use href="#logo" x="8" y="8" width="20" height="20"/></svg></div>
    <div class="app run"><svg viewBox="0 0 36 36"><path d="M18 7a11 11 0 1 1-5.500 20.500L7 29l1.500-5A11 11 0 0 1 18 7z" fill="#fff"/><circle cx="18" cy="18" r="9.300" fill="#3fc351"/><path d="M14 13q2-1 2.500 1t0 2.500q1 2.500 3.500 3.500 1.500-2 2.500-1t1.500 1.500q-1 3-4 2.500-6-2-7-7 0-2 1-3z" fill="#fff"/></svg><span class="badge">3</span></div>
    <div class="app run"><svg viewBox="0 0 36 36"><path d="M16 6h4l1.500 4 3 1.500 4-1 2 4-3 3v2l3 3-2 4-4-1-3 1.500L20 31h-4l-1.500-4-3-1.500-4 1-2-4 3-3v-2l-3-3 2-4 4 1 3-1.500z" fill="#6a7078"/><circle cx="18" cy="18.500" r="6" fill="#dfe5ea"/><circle cx="18" cy="18.500" r="4" fill="#1764b5"/></svg></div>
  </div>
  <div class="tray">
    <svg width="12" height="8" viewBox="0 0 12 8"><path d="m1 6.500 5-5 5 5" fill="none" stroke="#222" stroke-width="1.300"/></svg>
    <svg class="cloudy" width="17" height="15" viewBox="0 0 17 15"><path d="M4 11q-3-.5-3-3t3-3.500Q6 1 9.500 1.500T14 6l-6 6z" fill="#999" stroke="#222"/><circle cx="12" cy="10.500" r="4" fill="#fff"/><path d="M9 10q.5-2.500 3-2.500t3 2M15 11.500q-.5 2.500-3 2.500t-3-2M15.300 7v2.800h-2.500M8.700 14v-2.500h2.500" fill="none" stroke="#1a74d0" stroke-width="1.300"/></svg>
    <div class="lang"><span>ENG</span><span>IN</span></div>
    <svg class="sys" width="64" height="16" viewBox="0 0 64 16" fill="none" stroke="#222" stroke-width="1.200"><path d="M1 6q6-5.500 12 0M3 8.500q4-3.500 8 0M5 11q2-1.500 4 0" /><circle cx="7" cy="12.500" r=".8" fill="#222"/><path d="M23.500 6h2.500l3.500-3v10L26 10h-2.500zM32 5.500q1.500 2.500 0 5M34.500 4q2.500 4 0 8M37 2.500q3.500 5.500 0 11"/><rect x="47.500" y="2.500" width="13" height="10" rx="1.500"/><path d="M49.500 4.500h5v6h-5z" fill="#222" stroke="none"/><path d="M62.500 6v3"/></svg>
    <div class="clock"><span>16:10</span><span>05-10-2023</span></div>
    <span class="notif">6</span>
  </div>
</footer>
</body>
</html>
```
FILE: styles.css
```css
* { box-sizing: border-box; }
body { margin: 0; width: 1920px; height: 1080px; overflow: hidden; display: flex; flex-direction: column; font: 350 12.5px "Inter", "Open Sans", sans-serif; color: #444; background: #f5f5f5; }
h1, h2, h3, ul { margin: 0; padding: 0; list-style: none; }
svg { display: block; flex: none; }
.defs { position: absolute; }

.titlebar { height: 23px; display: flex; align-items: center; background: linear-gradient(90deg, #f8eeee 0, #faf0ee 45%, #f9f0e2 75%, #f9f1df 100%); font: 12px "Open Sans", sans-serif; color: #111; }
.app-icon { margin-left: 2px; background: #f7f9fa; border-right: 1px solid #aaa; border-bottom: 1px solid #aaa; }
.app-title { margin-left: 6px; letter-spacing: -.31px; }
.win-buttons { margin-left: auto; margin-right: 12px; }

.menubar { height: 20px; background: #fff; display: grid; grid-template-columns: 34px 40px 72px 73px 43px 59px 40px 54px 48px 60px auto; padding: 1px 0 0 8px; font: 12px/20px "Open Sans", sans-serif; letter-spacing: -.35px; color: #000; }

.toolbar { height: 41px; border-top: 1px solid #ececec; background: #f5f5f5; display: flex; align-items: center; }
.tgroup { height: 35px; display: flex; align-items: center; border-right: 1px solid #d0d0d0; color: #555; }
.ic { width: 31px; height: 24px; fill: none; }
.cr { width: 6px; height: 4px; margin: 0 2px; }
.dim { color: #b5b5b5; }
.tight { margin-left: -1px; }
.home { width: 48px; padding-left: 9px; }
.g2 { width: 262px; padding-left: 7px; }
.g3 { width: 126px; padding-left: 5px; }
.g4 { width: 110px; padding-left: 6px; gap: 1px; }
.g5 { width: 278px; padding-left: 7px; }
.g6 { width: 86px; padding-left: 7px; }
.g7 { border: 0; padding-left: 7px; }
.combo { margin-left: 10px; width: 104px; height: 23px; border: 1px solid #cfcfcf; border-radius: 2px; display: flex; align-items: center; justify-content: flex-end; padding-right: 5px; color: #c4c4c4; }
.combo .cr { width: 8px; height: 5px; margin: 0; }
.showme { margin-left: auto; margin-right: 28px; display: flex; align-items: center; color: #333; font-size: 13px; }
.showme .sign { margin-right: 17px; }
.showme span { margin-left: 7px; margin-top: -1px; letter-spacing: -.35px; }

.workspace { height: 897px; display: flex; }
.side { width: 210px; background: #fafafa; border-right: 1px solid #c9c9c9; border-top: 1px solid #c9c9c9; display: flex; flex-direction: column; }
.side-tabs { display: flex; height: 26px; }
.side-tabs b { width: 114px; padding-left: 18px; line-height: 24px; font-size: 13px; font-weight: 600; color: #111; letter-spacing: -.2px; }
.layout-tab { flex: 1; display: flex; justify-content: space-between; align-items: center; padding: 0 7px 1px 12px; border-left: 1px solid #c9c9c9; border-bottom: 1px solid #c9c9c9; font-size: 13px; }
.devices { height: 101px; padding: 12px 18px 0; border-bottom: 1px solid #c9c9c9; }
.device { height: 20px; line-height: 21px; padding-left: 13px; }
.sel { background: #e6e6e6; }
.sub { padding-left: 23px; }
.preview { margin: 12px 0 0 21px; width: 130px; height: 23px; border: 1px solid #c4c4c4; border-radius: 2px; background: #fff; text-align: center; line-height: 20px; font-size: 12px; letter-spacing: -.1px; }
h3 { font-size: 13px; font-weight: 600; color: #333; line-height: 20px; letter-spacing: -.2px; }
.size { height: 73px; padding: 4px 18px 0; border-bottom: 1px solid #c9c9c9; }
.size-select { width: 173px; margin-top: 3px; height: 24px; display: flex; align-items: center; justify-content: space-between; border-bottom: 1px solid #c4c4c4; padding-left: 1px; color: #666; }
.size-select span { color: #444; font-size: 12px; letter-spacing: -.17px; }
.sheets { height: 404px; padding: 4px 18px 0; border-bottom: 1px solid #c9c9c9; }
.sheets ul { margin-top: 11px; }
.sheets li { height: 20px; display: flex; align-items: center; gap: 8px; line-height: 20px; }
.sheets li svg { width: 17px; height: 17px; }
.objects { padding: 1px 12px 0; color: #333; }
.objects h3 { font-weight: 500; }
.obj-body { display: flex; justify-content: space-between; height: 205px; margin-top: 4px; }
.obj-body ul { padding: 6px 0 0 4px; }
.obj-body li { height: 20px; display: flex; align-items: center; gap: 6px; font-size: 12px; }
.obj-body li svg { width: 13px; height: 13px; fill: none; stroke: #666; }
.scroll { width: 17px; background: #f1f1f1; display: flex; flex-direction: column; align-items: center; padding: 6px 0 7px; justify-content: space-between; }
.scroll .up { transform: rotate(180deg); color: #a0a0a0; }
.thumb { width: 13px; height: 123px; background: #c1c1c1; margin-bottom: 48px; }
.toggle { display: flex; height: 24px; margin-top: 6px; width: 185px; line-height: 22px; text-align: center; font-size: 12px; }
.toggle b { width: 93px; background: #666; color: #fff; border: 1px solid #666; font-weight: 600; }
.toggle span { flex: 1; border: 1px solid #c4c4c4; border-left: 0; background: #fff; }
.check { display: flex; align-items: center; gap: 6px; margin: 7px 0 0 6px; font-size: 12px; height: 17px; }
.check i { width: 14px; height: 14px; border: 1px solid #666; border-radius: 1px; background: #fff; }

.dashboard { width: 1000px; height: 800px; background: #deeaf0; }
h1 svg text, h2 svg text { font: 600 19px "Open Sans", sans-serif; fill: #333; }
h2.red svg text { fill: #e15759; }
.dashboard h1 { height: 56px; }
.panes { display: flex; gap: 7px; padding-left: 13px; }
.border { fill: none; stroke: #a2a2a2; stroke-width: 3; }
.border.thin { stroke: #bdbdbd; stroke-width: 2.6; }
.states { stroke: #4a4a4a; stroke-width: 3.2; stroke-linejoin: round; }
.country { font: 12px "Noto Sans", sans-serif; fill: #999; stroke: #f2f2f2; stroke-width: 2px; paint-order: stroke; }
.state-names { font: 600 15px "Open Sans", sans-serif; fill: #000; }
.lgd { font: 13px "Noto Sans", sans-serif; fill: #333; }
.attrib { font: 500 11px "Roboto", sans-serif; fill: #555; }
.unknown { font: 700 13px "Open Sans", sans-serif; fill: #fff; }
.bubbles { background: #e7f0f6; }
.blabel { font: 600 44px "Open Sans", sans-serif; fill: #000; }
.blabel.white { fill: #fff; }
.cloud { background: #e1e6f1; font-family: "Noto Sans", "Open Sans", sans-serif; font-weight: 300; }
.cloud .s { font-weight: 400; }

.sheet-tabs { height: 31px; display: grid; grid-template-columns: 131px 173px 124px 104px 148px 101px 45px 148px 189px 102px 105px 103px 71px 73px 32px 32px 32px 1fr; border-top: 1px solid #c4c4c4; border-bottom: 1px solid #c9c9c9; background: #e6e6e6; color: #5e5e5e; font-size: 12px; letter-spacing: -.15px; }
.sheet-tabs div { border-right: 1px solid #c9c9c9; padding-left: 5px; display: flex; align-items: center; gap: 6px; white-space: nowrap; }
.sheet-tabs div:nth-child(2) { padding-left: 6px; }
.sheet-tabs div:first-child { padding-left: 9px; }
.sheet-tabs div svg { margin-top: -2px; }
.sheet-tabs div:nth-child(n+10) { padding-left: 7px; gap: 5px; }
.sheet-tabs div.active { background: #fff; font-weight: 600; color: #555; letter-spacing: -.25px; padding-bottom: 2px; }
.sheet-tabs .active svg { margin-top: 0; }
.sheet-tabs .new svg { margin: 2px 0 0 0; }
.sheet-tabs .rest { border: 0; }
.status { height: 20px; display: grid; grid-template-columns: 1554px 127px 27px 27px 47px 72px 1fr; background: #ebebeb; }
.status div { border-right: 1px solid #c9c9c9; display: flex; align-items: center; }
.status .user { padding-left: 5px; font-size: 11.5px; color: #333; }
.user span { margin-left: 10px; width: 85px; letter-spacing: -.3px; }
.status .navs { padding-left: 6px; }
.status .views { padding-left: 7px; border: 0; }

.taskbar { height: 48px; border-top: 1px solid #b4c4cc; background: linear-gradient(90deg, #e6def3 0, #e3e4f6 11%, #dbebf8 22%, #caf6f6 37%, #c8f8ee 52%, #cef7e4 75%, #d2f8da 100%); display: flex; align-items: center; font: 12px "Open Sans", sans-serif; color: #222; padding-bottom: 1px; }
.weather { width: 617px; padding-left: 19px; display: flex; align-items: center; gap: 7px; line-height: 16px; letter-spacing: -.2px; }
.haze { color: #555; }
.apps { display: flex; align-items: center; width: 1007px; }
.search { width: 218px; height: 31px; margin: 0 7px 0 14px; border-radius: 16px; background: #f0fcfc; border: 1px solid #b9dedd; display: flex; align-items: center; padding: 0 8px 0 9px; font-size: 13.5px; color: #555; }
.search span { flex: 1; padding-left: 9px; letter-spacing: -.2px; }
.app { width: 36px; height: 36px; margin-right: 8px; position: relative; }
.app svg { width: 36px; height: 36px; }
.run::after, .current::after { content: ""; position: absolute; bottom: -3px; left: 15px; width: 6px; height: 3px; border-radius: 2px; background: #7d8f8d; }
.current { background: #e9fbf6; border-radius: 4px; box-shadow: 0 0 0 1px #e9fbf6; }
.current::after { left: 10px; width: 16px; background: #0a74d4; }
.badge { position: absolute; right: 0; top: 1px; width: 15px; height: 15px; border-radius: 50%; background: #0a6fd0; color: #fff; font-size: 11px; line-height: 15px; text-align: center; }
.tray { display: flex; align-items: center; }
.cloudy { margin-left: 18px; }
.lang { margin-left: 17px; width: 24px; display: flex; flex-direction: column; align-items: center; line-height: 16px; letter-spacing: -.3px; }
.sys { margin-left: 18px; }
.clock { margin-left: 13px; width: 66px; display: flex; flex-direction: column; align-items: flex-end; line-height: 16px; letter-spacing: .05px; white-space: nowrap; }
.notif { margin-left: 11px; width: 16px; height: 16px; border-radius: 50%; background: #0a74d4; color: #fff; font-size: 11px; line-height: 16px; text-align: center; }
```
